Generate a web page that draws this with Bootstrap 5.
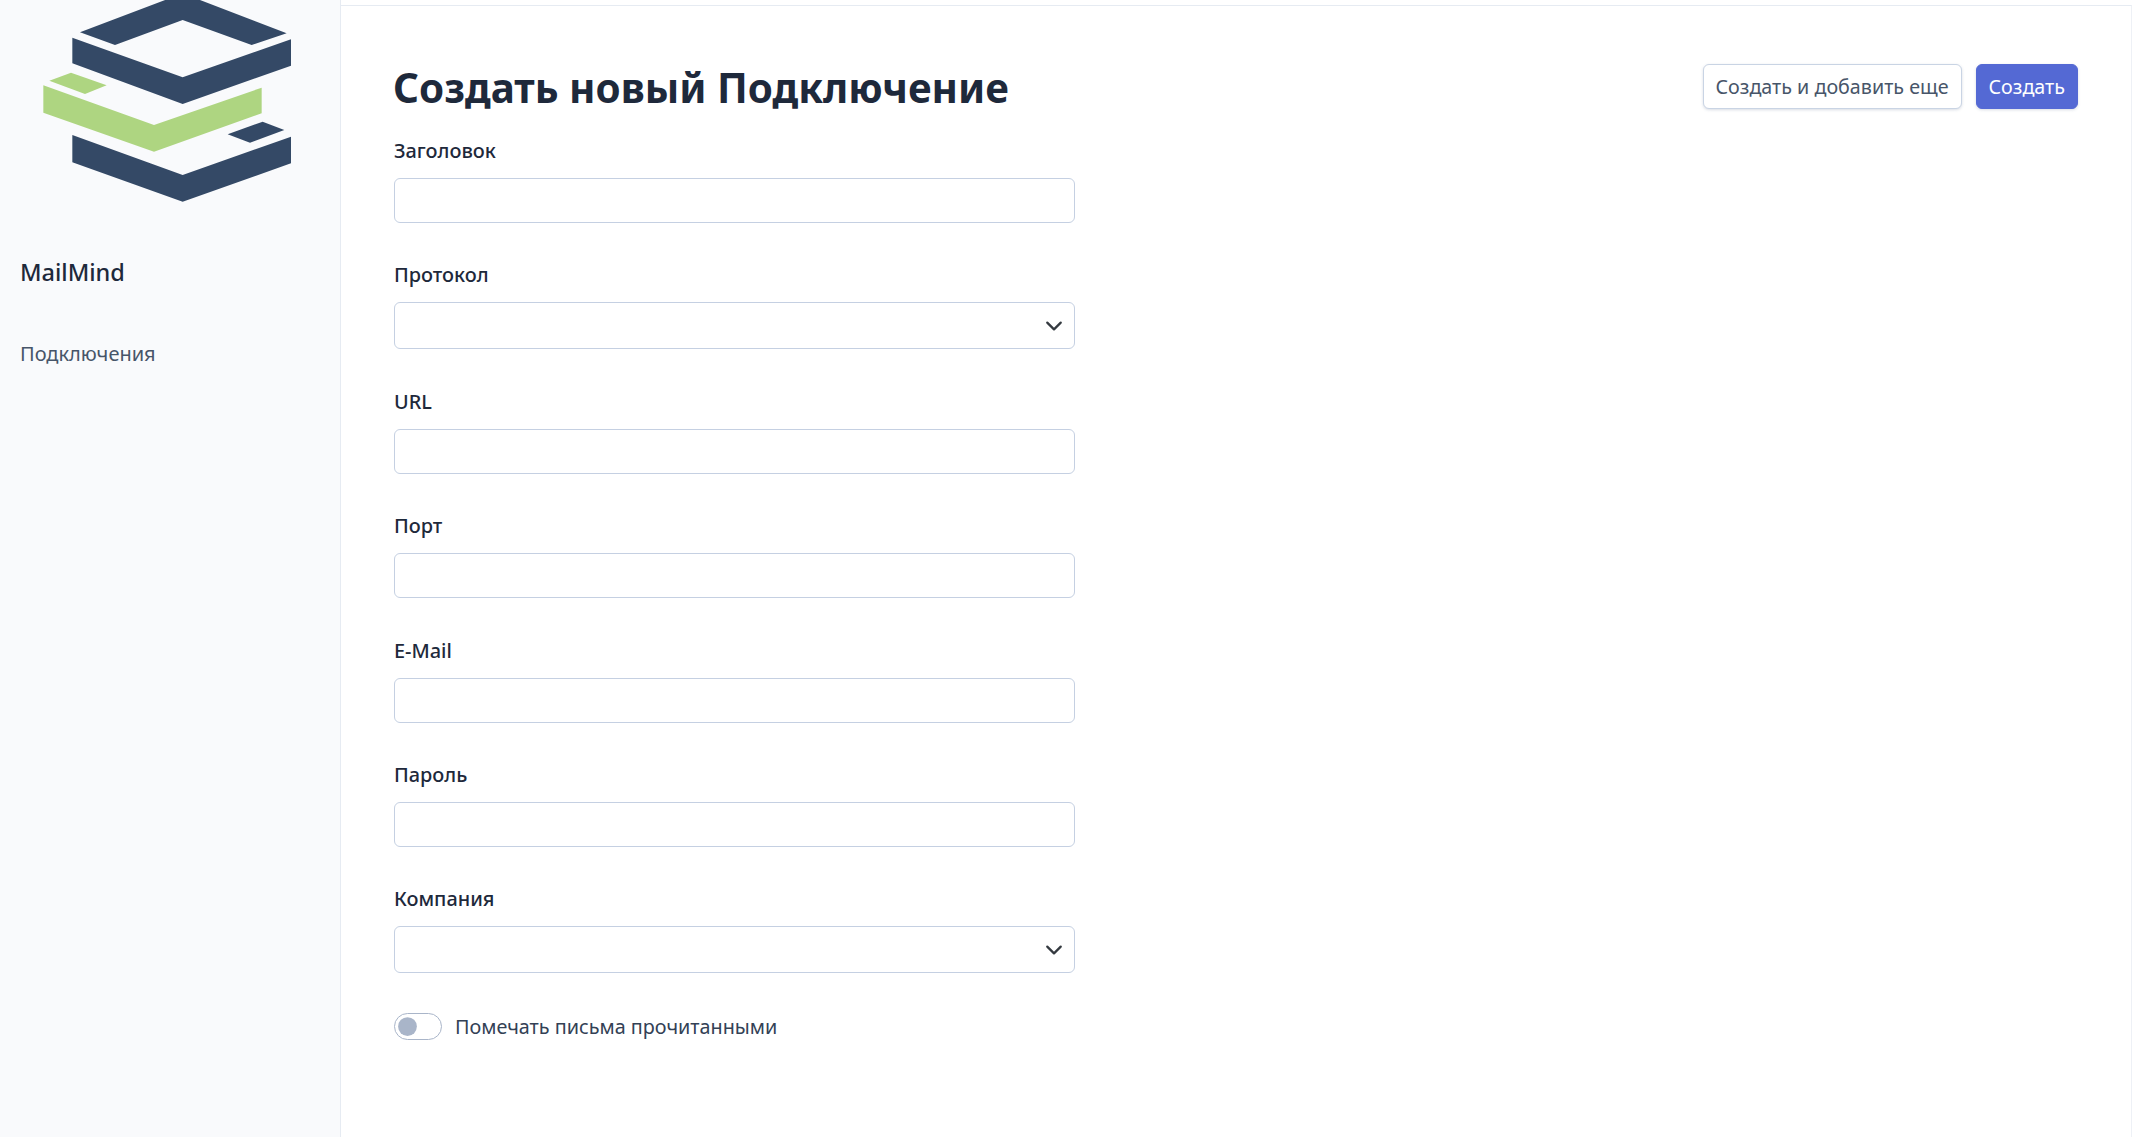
<!DOCTYPE html>
<html lang="ru">
<head>
    <meta charset="UTF-8">
    <meta name="viewport" content="width=device-width, initial-scale=1.0">
    <link rel="stylesheet" href="https://cdn.jsdelivr.net/npm/bootstrap@5.3.3/dist/css/bootstrap.min.css">
    <title>Создать новый Подключение</title>
    <style>
        body {
            font-family: "Noto Sans", "Open Sans", sans-serif;
            font-size: 20px;
            color: #1e293b;
            background-color: #fff;
        }
        .app-shell {
            min-height: 100vh;
        }
        .side-panel {
            width: 341px;
            flex-shrink: 0;
            background-color: #f9fafc;
            border-right: 1px solid #e6ebf2;
        }
        .side-logo {
            display: block;
            width: 340px;
            height: 216px;
        }
        .side-brand {
            font-size: 23.5px;
            font-weight: 500;
            color: #1e293b;
            margin: 40px 0 0 20px;
            line-height: 32px;
        }
        .side-link {
            display: block;
            margin: 53px 0 0 20px;
            color: #475569;
            line-height: 26px;
            text-decoration: none;
        }
        .main-panel {
            flex: 1;
            border-top: 1px solid #e6ebf2;
            border-right: 1px solid #eef1f6;
            margin-top: 5px;
            padding: 58px 53px 0 53px;
        }
        .page-title {
            font-size: 40.4px;
            font-weight: 700;
            line-height: 48px;
            color: #1e293b;
            margin: 0 0 0 -1px;
        }
        .head-actions {
            gap: 14px;
        }
        .head-btn {
            font-size: 19.7px;
            line-height: 27px;
            padding: 8px 12px;
            border-radius: 6px;
            box-shadow: 0 1px 3px rgba(60, 80, 120, .2);
        }
        .btn-plain {
            background-color: #fff;
            border: 1px solid #c9d4e4;
            color: #475569;
        }
        .btn-main {
            background-color: #5469d4;
            border: 1px solid #5469d4;
            color: #fff;
        }
        .field-stack {
            width: 681px;
            margin-top: 25px;
        }
        .field-label {
            font-weight: 500;
            font-size: 19.9px;
            line-height: 28px;
            color: #1e293b;
            margin-bottom: 13px;
        }
        .field-box {
            margin-bottom: 38.4px;
        }
        .field-stack .form-control {
            height: 45px;
            border-color: #c5d0e2;
            border-radius: 6px;
        }
        .field-stack .form-select {
            height: 47px;
            border-color: #c5d0e2;
            border-radius: 6px;
            background-size: 22px 18px;
            background-position: right 9px center;
        }
        .switch-row {
            padding-left: 0;
            margin: 0;
            display: flex;
            align-items: center;
            gap: 13px;
            min-height: 27px;
        }
        .switch-row .form-check-input {
            width: 48px;
            height: 27px;
            margin: 0;
            float: none;
            border-color: #a9b5c9;
            background-image: url("data:image/svg+xml,%3csvg xmlns='http://www.w3.org/2000/svg' viewBox='-4 -4 8 8'%3e%3ccircle r='3' fill='%23a9b5c9'/%3e%3c/svg%3e");
        }
        .switch-row .form-check-label {
            font-size: 19.8px;
            color: #334155;
        }
    </style>
</head>
<body>
    <div class="app-shell d-flex">
        <aside class="side-panel">
            <svg class="side-logo" viewBox="0 0 1020 648" aria-hidden="true">
                <g fill="#344966">
                    <path d="M240 97 548 -20 860 100 755 135 548 60 345 135Z"/>
                    <path d="M217 113 548 232 873 118V197L548 312 217 190Z"/>
                    <path d="M217 405 548 525 873 410V490L548 605 217 487Z"/>
                    <path d="M683 403 788 365 853 390 750 428Z"/>
                </g>
                <g fill="#aed581">
                    <path d="M148 242 213 218 320 256 255 282Z"/>
                    <path d="M130 256 462 375 785 263V340L462 455 130 338Z"/>
                </g>
            </svg>
            <div class="side-brand">MailMind</div>
            <a class="side-link" href="#">Подключения</a>
        </aside>

        <main class="main-panel">
            <div class="d-flex justify-content-between align-items-start">
                <h1 class="page-title">Создать новый Подключение</h1>
                <div class="head-actions d-flex align-items-center">
                    <button class="btn head-btn btn-plain" type="button">Создать и добавить еще</button>
                    <button class="btn head-btn btn-main" type="button">Создать</button>
                </div>
            </div>

            <form class="field-stack">
                <div class="field-box">
                    <label class="form-label field-label d-block" for="title">Заголовок</label>
                    <input class="form-control" id="title" type="text">
                </div>
                <div class="field-box">
                    <label class="form-label field-label d-block" for="protocol">Протокол</label>
                    <select class="form-select" id="protocol"><option></option></select>
                </div>
                <div class="field-box">
                    <label class="form-label field-label d-block" for="url">URL</label>
                    <input class="form-control" id="url" type="text">
                </div>
                <div class="field-box">
                    <label class="form-label field-label d-block" for="port">Порт</label>
                    <input class="form-control" id="port" type="text">
                </div>
                <div class="field-box">
                    <label class="form-label field-label d-block" for="email">E-Mail</label>
                    <input class="form-control" id="email" type="email">
                </div>
                <div class="field-box">
                    <label class="form-label field-label d-block" for="password">Пароль</label>
                    <input class="form-control" id="password" type="password">
                </div>
                <div class="field-box">
                    <label class="form-label field-label d-block" for="company">Компания</label>
                    <select class="form-select" id="company"><option></option></select>
                </div>
                <div class="form-check form-switch switch-row">
                    <input class="form-check-input" id="markRead" type="checkbox" role="switch">
                    <label class="form-check-label" for="markRead">Помечать письма прочитанными</label>
                </div>
            </form>
        </main>
    </div>
    <script src="https://cdn.jsdelivr.net/npm/bootstrap@5.3.3/dist/js/bootstrap.bundle.min.js"></script>
</body>
</html>
